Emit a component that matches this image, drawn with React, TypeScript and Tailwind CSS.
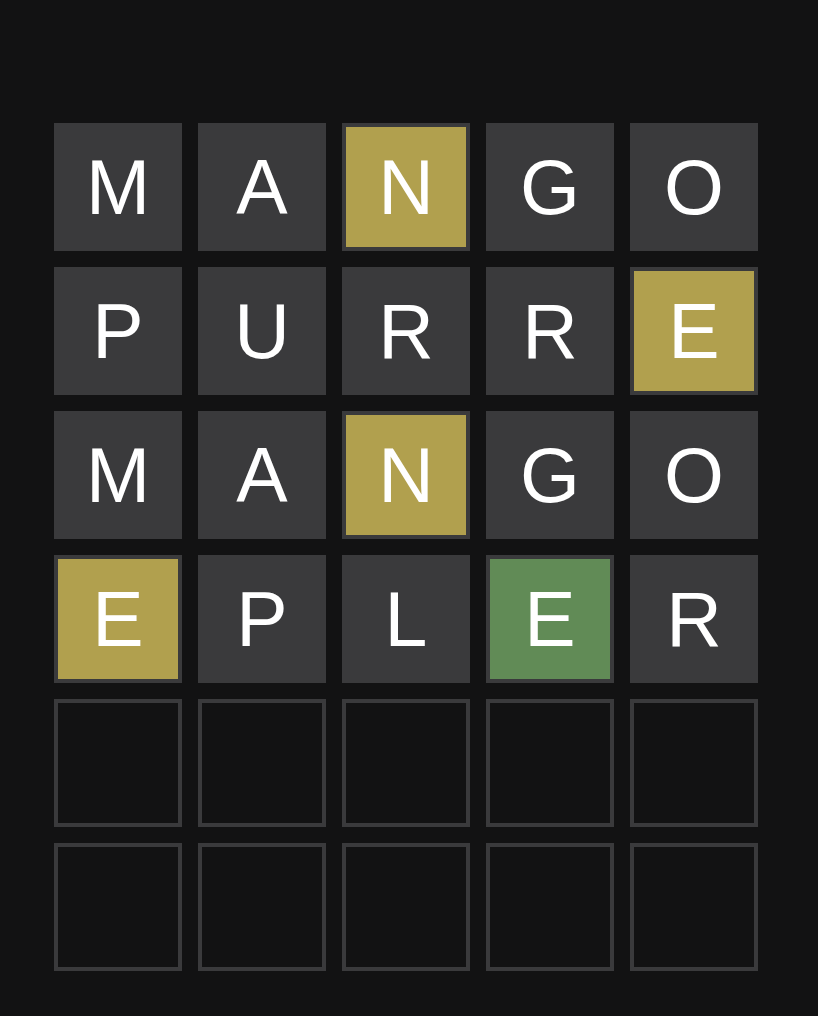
import React from "react";

type S = "g" | "y" | "c" | "e";
const rows: { l: string; s: S }[][] = [
  [{ l: "M", s: "g" }, { l: "A", s: "g" }, { l: "N", s: "y" }, { l: "G", s: "g" }, { l: "O", s: "g" }],
  [{ l: "P", s: "g" }, { l: "U", s: "g" }, { l: "R", s: "g" }, { l: "R", s: "g" }, { l: "E", s: "y" }],
  [{ l: "M", s: "g" }, { l: "A", s: "g" }, { l: "N", s: "y" }, { l: "G", s: "g" }, { l: "O", s: "g" }],
  [{ l: "E", s: "y" }, { l: "P", s: "g" }, { l: "L", s: "g" }, { l: "E", s: "c" }, { l: "R", s: "g" }],
  [{ l: "", s: "e" }, { l: "", s: "e" }, { l: "", s: "e" }, { l: "", s: "e" }, { l: "", s: "e" }],
  [{ l: "", s: "e" }, { l: "", s: "e" }, { l: "", s: "e" }, { l: "", s: "e" }, { l: "", s: "e" }],
];

const cls: Record<S, string> = {
  g: "bg-[#3a3a3c]",
  y: "bg-[#b1a04e] border-4 border-[#3a3a3c]",
  c: "bg-[#618b56] border-4 border-[#3a3a3c]",
  e: "bg-[#121213] border-4 border-[#3a3a3c]",
};

export default function App() {
  return (
    <div className="min-h-[1016px] w-full bg-[#121213] pt-[123px] pl-[54px]" style={{ fontFamily: '"Liberation Sans", Arial, sans-serif' }}>
      <div className="grid grid-cols-5 gap-4 w-[704px]">
        {rows.flat().map((t, i) => (
          <div
            key={i}
            className={`h-[128px] w-[128px] flex items-center justify-center text-white text-[77px] leading-none ${cls[t.s]}`}
          >
            {t.l}
          </div>
        ))}
      </div>
    </div>
  );
}
